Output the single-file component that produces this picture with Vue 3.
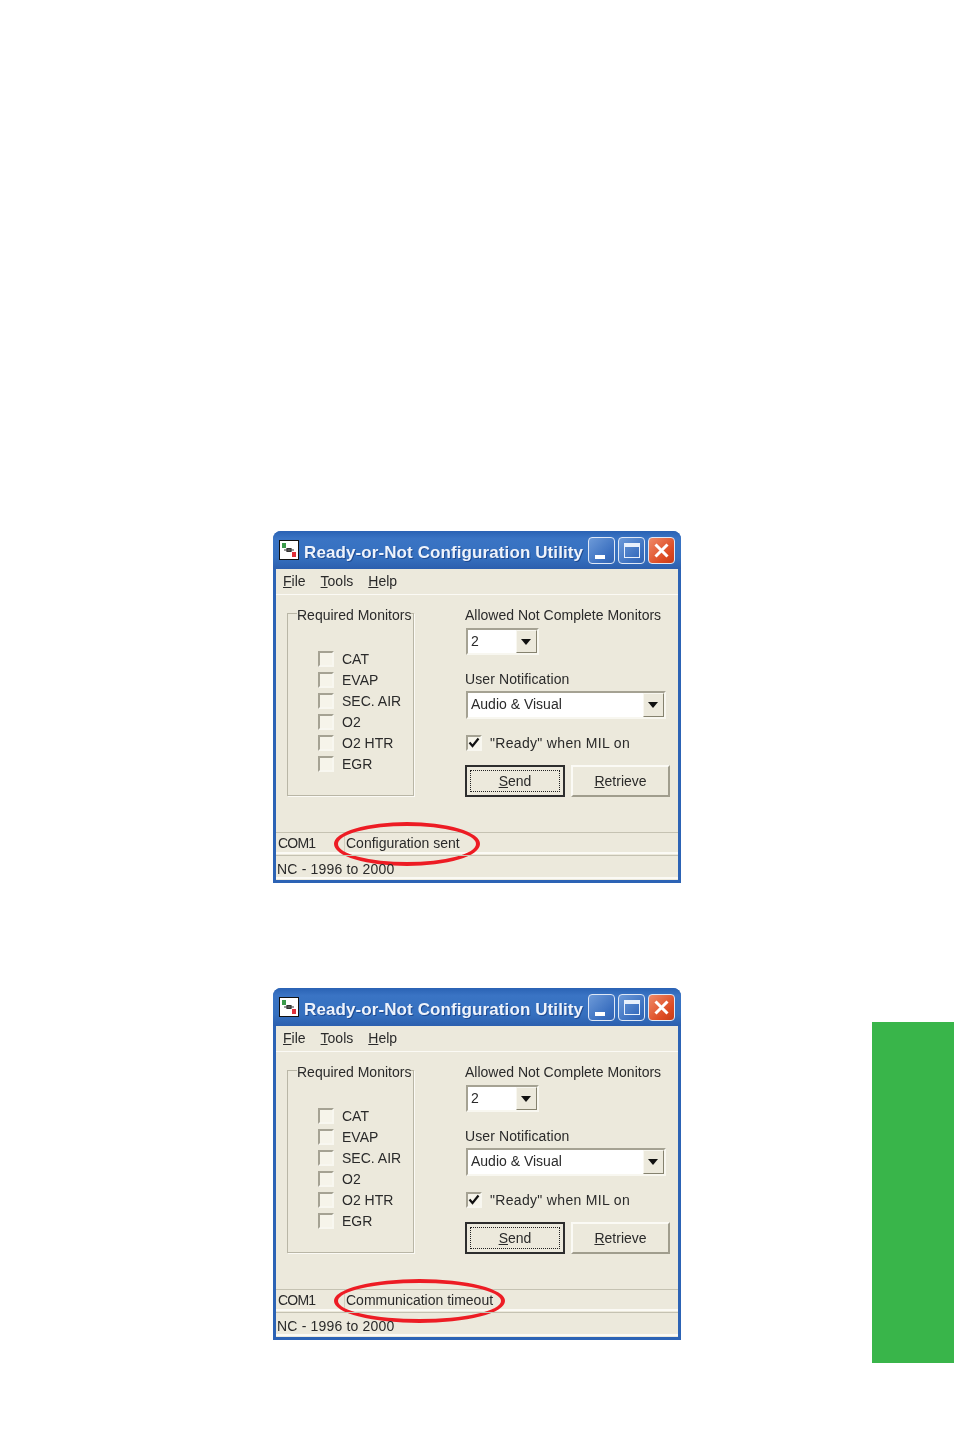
<script setup>
const monitors = ["CAT", "EVAP", "SEC. AIR", "O2", "O2 HTR", "EGR"];

const windows = [
  { status: "Configuration sent", ringWidth: 146 },
  { status: "Communication timeout", ringWidth: 171 },
];
</script>

<template>
  <div class="page">
    <div class="stack">
      <section v-for="win in windows" :key="win.status" class="window">
        <header class="titlebar">
          <svg class="app-icon" width="20" height="20" viewBox="0 0 20 20">
            <rect x="0.5" y="0.5" width="19" height="19" fill="#fff" stroke="#111" />
            <rect x="3" y="3" width="4" height="5" fill="#3a9a4a" />
            <rect x="13" y="12" width="4" height="5" fill="#e0303a" />
            <path d="M5 10h10M8 8.5h4v3H8z" stroke="#333" stroke-width="1.2" fill="#777" />
          </svg>
          <span class="title">Ready-or-Not Configuration Utility</span>
          <button class="caption-btn">
            <span class="min-glyph"></span>
          </button>
          <button class="caption-btn">
            <span class="max-glyph"></span>
          </button>
          <button class="caption-btn close">
            <svg width="17" height="17" viewBox="0 0 17 17">
              <path d="M2.5 2.5l12 12M14.5 2.5l-12 12" stroke="#fff" stroke-width="3" />
            </svg>
          </button>
        </header>

        <div class="client">
          <nav class="menu">
            <span><u>F</u>ile</span>
            <span><u>T</u>ools</span>
            <span><u>H</u>elp</span>
          </nav>

          <div class="body">
            <fieldset class="group">
              <legend>Required Monitors</legend>
              <label v-for="name in monitors" :key="name" class="monitor">
                <span class="check"></span>
                {{ name }}
              </label>
            </fieldset>

            <div class="options">
              <div class="label first">Allowed Not Complete Monitors</div>
              <div class="combo small">
                <span class="value">2</span>
                <span class="arrow"></span>
              </div>

              <div class="label second">User Notification</div>
              <div class="combo wide">
                <span class="value">Audio &amp; Visual</span>
                <span class="arrow"></span>
              </div>

              <label class="ready">
                <span class="check">
                  <svg width="12" height="12" viewBox="0 0 12 12">
                    <path d="M1.5 5.5l3 3.5 6-7.5" stroke="#111" stroke-width="2.2" fill="none" />
                  </svg>
                </span>
                "Ready" when MIL on
              </label>

              <div class="buttons">
                <button class="btn default"><span class="focus"><u>S</u>end</span></button>
                <button class="btn"><u>R</u>etrieve</button>
              </div>
            </div>
          </div>

          <div class="status first-row">
            <span class="port">COM1</span>
            <span class="message">
              {{ win.status }}
              <i class="ring" :style="{ width: win.ringWidth + 'px' }"></i>
            </span>
          </div>
          <div class="status second-row">NC - 1996 to 2000</div>
        </div>
      </section>
    </div>

    <aside class="tab"></aside>
  </div>
</template>

<style>
html,
body {
  background: #fff;
}
</style>

<style scoped>
.page {
  display: flex;
  justify-content: space-between;
  width: 954px;
  height: 1454px;
  overflow: hidden;
  background: #fff;
  font-family: "Liberation Sans", Arial, sans-serif;
  font-size: 14px;
  color: #2a2a2a;
}

.stack {
  display: flex;
  flex-direction: column;
  gap: 105px;
  margin: 531px 0 0 273px;
}

.tab {
  width: 82px;
  height: 341px;
  margin-top: 1022px;
  background: #39b54a;
}

.window {
  width: 408px;
  height: 352px;
  box-sizing: border-box;
  display: flex;
  flex-direction: column;
  padding: 0 3px 3px;
  border-radius: 8px 8px 0 0;
  background: #2c63b5;
  filter: blur(0.3px);
}

.titlebar {
  display: flex;
  align-items: center;
  height: 38px;
  flex: none;
  margin: 0 -3px;
  padding: 0 6px 0 6px;
  border-radius: 8px 8px 0 0;
  background: linear-gradient(#2a62b4, #3a74c4 20%, #3570bf 70%, #2c5fae);
}

.app-icon {
  flex: none;
}

.title {
  flex: 1;
  margin: 5px 0 0 5px;
  font-weight: bold;
  font-size: 17px;
  letter-spacing: 0.1px;
  color: #eef3fb;
  white-space: nowrap;
  text-shadow: 1px 1px 0 #1f4a90;
}

.caption-btn {
  flex: none;
  display: flex;
  align-items: center;
  justify-content: center;
  position: relative;
  width: 27px;
  height: 27px;
  margin-left: 3px;
  padding: 0;
  border: 1.5px solid #dfe8f6;
  border-radius: 4px;
  background: linear-gradient(135deg, #6d9ad8, #3b70c0 70%, #3163b2);
}

.caption-btn.close {
  background: linear-gradient(135deg, #ef8a68, #dd4a22 70%, #c73c18);
}

.min-glyph {
  position: absolute;
  left: 6px;
  bottom: 4px;
  width: 10px;
  height: 4px;
  background: #fff;
}

.max-glyph {
  width: 16px;
  height: 15px;
  box-sizing: border-box;
  border: 1.5px solid #e8f0fb;
  border-top-width: 4px;
}

.client {
  flex: 1;
  display: flex;
  flex-direction: column;
  background: #ece9dc;
}

.menu {
  display: flex;
  gap: 15px;
  align-items: center;
  height: 23px;
  padding: 0 0 2px 7px;
  border-bottom: 1px solid #fbfaf5;
}

.body {
  display: flex;
  height: 237px;
  flex: none;
}

.group {
  box-sizing: border-box;
  width: 127px;
  height: 191px;
  margin: 10px 0 0 11px;
  padding: 26px 0 0 0;
  border: 1px solid #b9b6a6;
  box-shadow: 1px 1px 0 #fbfaf5;
  min-width: 0;
}

.group legend {
  padding: 0;
  margin-left: 9px;
  line-height: 17px;
  white-space: nowrap;
  transform: translateY(2px);
}

.monitor {
  display: flex;
  align-items: center;
  gap: 8px;
  height: 21px;
  margin-left: 30px;
}

.check {
  flex: none;
  display: flex;
  align-items: center;
  justify-content: center;
  box-sizing: border-box;
  width: 16px;
  height: 16px;
  border: 2px solid;
  border-color: #a5a293 #f8f7f0 #f8f7f0 #a5a293;
  background: #f6f4ea;
}

.options {
  display: flex;
  flex-direction: column;
  align-items: flex-start;
  margin-left: 51px;
}

.label {
  line-height: 18px;
}

.label.first {
  margin-top: 11px;
}

.label.second {
  margin-top: 15px;
  letter-spacing: 0.1px;
}

.combo {
  display: flex;
  align-items: stretch;
  box-sizing: border-box;
  height: 27px;
  margin: 4px 0 0 1px;
  border: 2px solid;
  border-color: #a5a293 #f8f7f0 #f8f7f0 #a5a293;
  background: #fff;
}

.combo.small {
  width: 73px;
}

.combo.wide {
  width: 200px;
  height: 28px;
  margin-top: 3px;
}

.value {
  flex: 1;
  padding-left: 3px;
  line-height: 23px;
}

.arrow {
  position: relative;
  width: 21px;
  box-sizing: border-box;
  border: 1.5px solid;
  border-color: #f8f7f0 #85826f #85826f #f8f7f0;
  background: #ece9dc;
}

.arrow::after {
  content: "";
  position: absolute;
  left: 4px;
  top: 8px;
  border: 5px solid transparent;
  border-top: 6px solid #111;
  border-bottom: 0;
}

.ready {
  display: flex;
  align-items: center;
  gap: 8px;
  height: 18px;
  margin: 15px 0 0 1px;
  letter-spacing: 0.32px;
}

.buttons {
  display: flex;
  gap: 6px;
  margin-top: 13px;
}

.btn {
  box-sizing: border-box;
  width: 99px;
  height: 32px;
  padding: 0;
  border: 2px solid;
  border-color: #fbfaf5 #a09d8d #a09d8d #fbfaf5;
  background: #ece9dc;
  font: inherit;
  color: inherit;
}

.btn.default {
  width: 100px;
  border: 2px solid #2d2d2d;
  padding: 3px;
}

.focus {
  display: block;
  height: 100%;
  box-sizing: border-box;
  border: 1px dotted #222;
  line-height: 20px;
}

.status {
  position: relative;
  box-sizing: border-box;
  flex: none;
  border-top: 1px solid #c5c2b2;
  border-bottom: 2px solid #fbfaf5;
  white-space: nowrap;
}

.first-row {
  display: flex;
  height: 22px;
  line-height: 21px;
  margin-top: 0;
  padding-left: 2px;
}

.second-row {
  height: 24px;
  margin-top: 1px;
  line-height: 26px;
  padding-left: 1px;
  letter-spacing: 0.18px;
}

.port {
  width: 66px;
  flex: none;
  letter-spacing: -0.8px;
}

.message {
  position: relative;
  padding-left: 1px;
  border-left: 1px solid #d2cfbf;
}

.ring {
  position: absolute;
  left: -11px;
  top: -11px;
  height: 44px;
  box-sizing: border-box;
  border: 4.5px solid #ed1c24;
  border-radius: 50%;
}
</style>
